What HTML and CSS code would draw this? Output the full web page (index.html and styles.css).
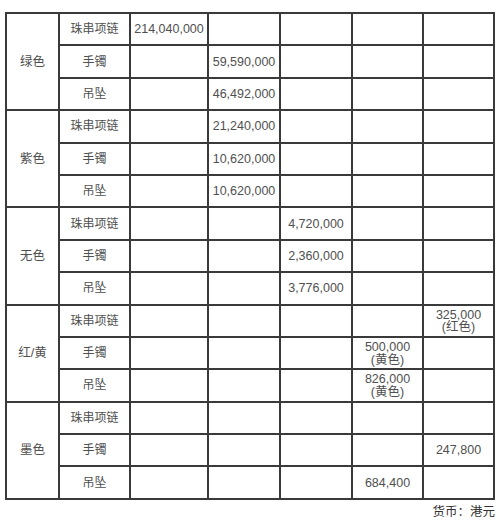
FILE: index.html
```html
<!DOCTYPE html>
<html>
<head>
<meta charset="utf-8">
<link rel="stylesheet" href="styles.css">
</head>
<body>
<div class="page">
<table class="grid">
<colgroup>
<col class="c1"><col class="c2"><col class="c3"><col class="c4"><col class="c5"><col class="c6"><col class="c7">
</colgroup>
<tbody>
<tr><td rowspan="3" class="grp">绿色</td><td class="item">珠串项链</td><td>214,040,000</td><td></td><td></td><td></td><td></td></tr>
<tr><td class="item">手镯</td><td></td><td>59,590,000</td><td></td><td></td><td></td></tr>
<tr><td class="item">吊坠</td><td></td><td>46,492,000</td><td></td><td></td><td></td></tr>
<tr><td rowspan="3" class="grp">紫色</td><td class="item">珠串项链</td><td></td><td>21,240,000</td><td></td><td></td><td></td></tr>
<tr><td class="item">手镯</td><td></td><td>10,620,000</td><td></td><td></td><td></td></tr>
<tr><td class="item">吊坠</td><td></td><td>10,620,000</td><td></td><td></td><td></td></tr>
<tr><td rowspan="3" class="grp">无色</td><td class="item">珠串项链</td><td></td><td></td><td>4,720,000</td><td></td><td></td></tr>
<tr><td class="item">手镯</td><td></td><td></td><td>2,360,000</td><td></td><td></td></tr>
<tr><td class="item">吊坠</td><td></td><td></td><td>3,776,000</td><td></td><td></td></tr>
<tr><td rowspan="3" class="grp">红/黄</td><td class="item">珠串项链</td><td></td><td></td><td></td><td></td><td class="two">325,000<br>(红色)</td></tr>
<tr><td class="item">手镯</td><td></td><td></td><td></td><td class="two">500,000<br>(黄色)</td><td></td></tr>
<tr><td class="item">吊坠</td><td></td><td></td><td></td><td class="two">826,000<br>(黄色)</td><td></td></tr>
<tr><td rowspan="3" class="grp">墨色</td><td class="item">珠串项链</td><td></td><td></td><td></td><td></td><td></td></tr>
<tr><td class="item">手镯</td><td></td><td></td><td></td><td></td><td>247,800</td></tr>
<tr><td class="item">吊坠</td><td></td><td></td><td></td><td>684,400</td><td></td></tr>
</tbody>
</table>
<div class="note">货币：港元</div>
</div>
</body>
</html>
```
FILE: styles.css
```css
html, body {
  margin: 0;
  padding: 0;
  background: #ffffff;
}
.page {
  padding: 12px 0 0 5px;
  width: 491px;
  font-family: "Liberation Sans", "Noto Sans CJK SC", sans-serif;
  color: #505050;
}
.grid {
  border-collapse: collapse;
  table-layout: fixed;
  width: 490px;
  height: 488px;
}
.c1 { width: 53px; }
.c2 { width: 71px; }
.c3 { width: 78px; }
.c4 { width: 72px; }
.c5 { width: 72px; }
.c6 { width: 71px; }
.c7 { width: 71px; }
.grid tr {
  height: 32.33px;
}
.grid td {
  border: 2px solid #3a3a3a;
  padding: 0;
  text-align: center;
  vertical-align: middle;
  font-size: 12.5px;
  line-height: 14px;
  white-space: nowrap;
}
.grid td.item {
  font-size: 12px;
}
.grid td.grp {
  font-size: 12.5px;
}
.grid td.two {
  line-height: 12.5px;
  padding-top: 1px;
}
.note {
  text-align: right;
  font-size: 12.5px;
  color: #333;
  padding-top: 1px;
  padding-right: 1px;
}
```
